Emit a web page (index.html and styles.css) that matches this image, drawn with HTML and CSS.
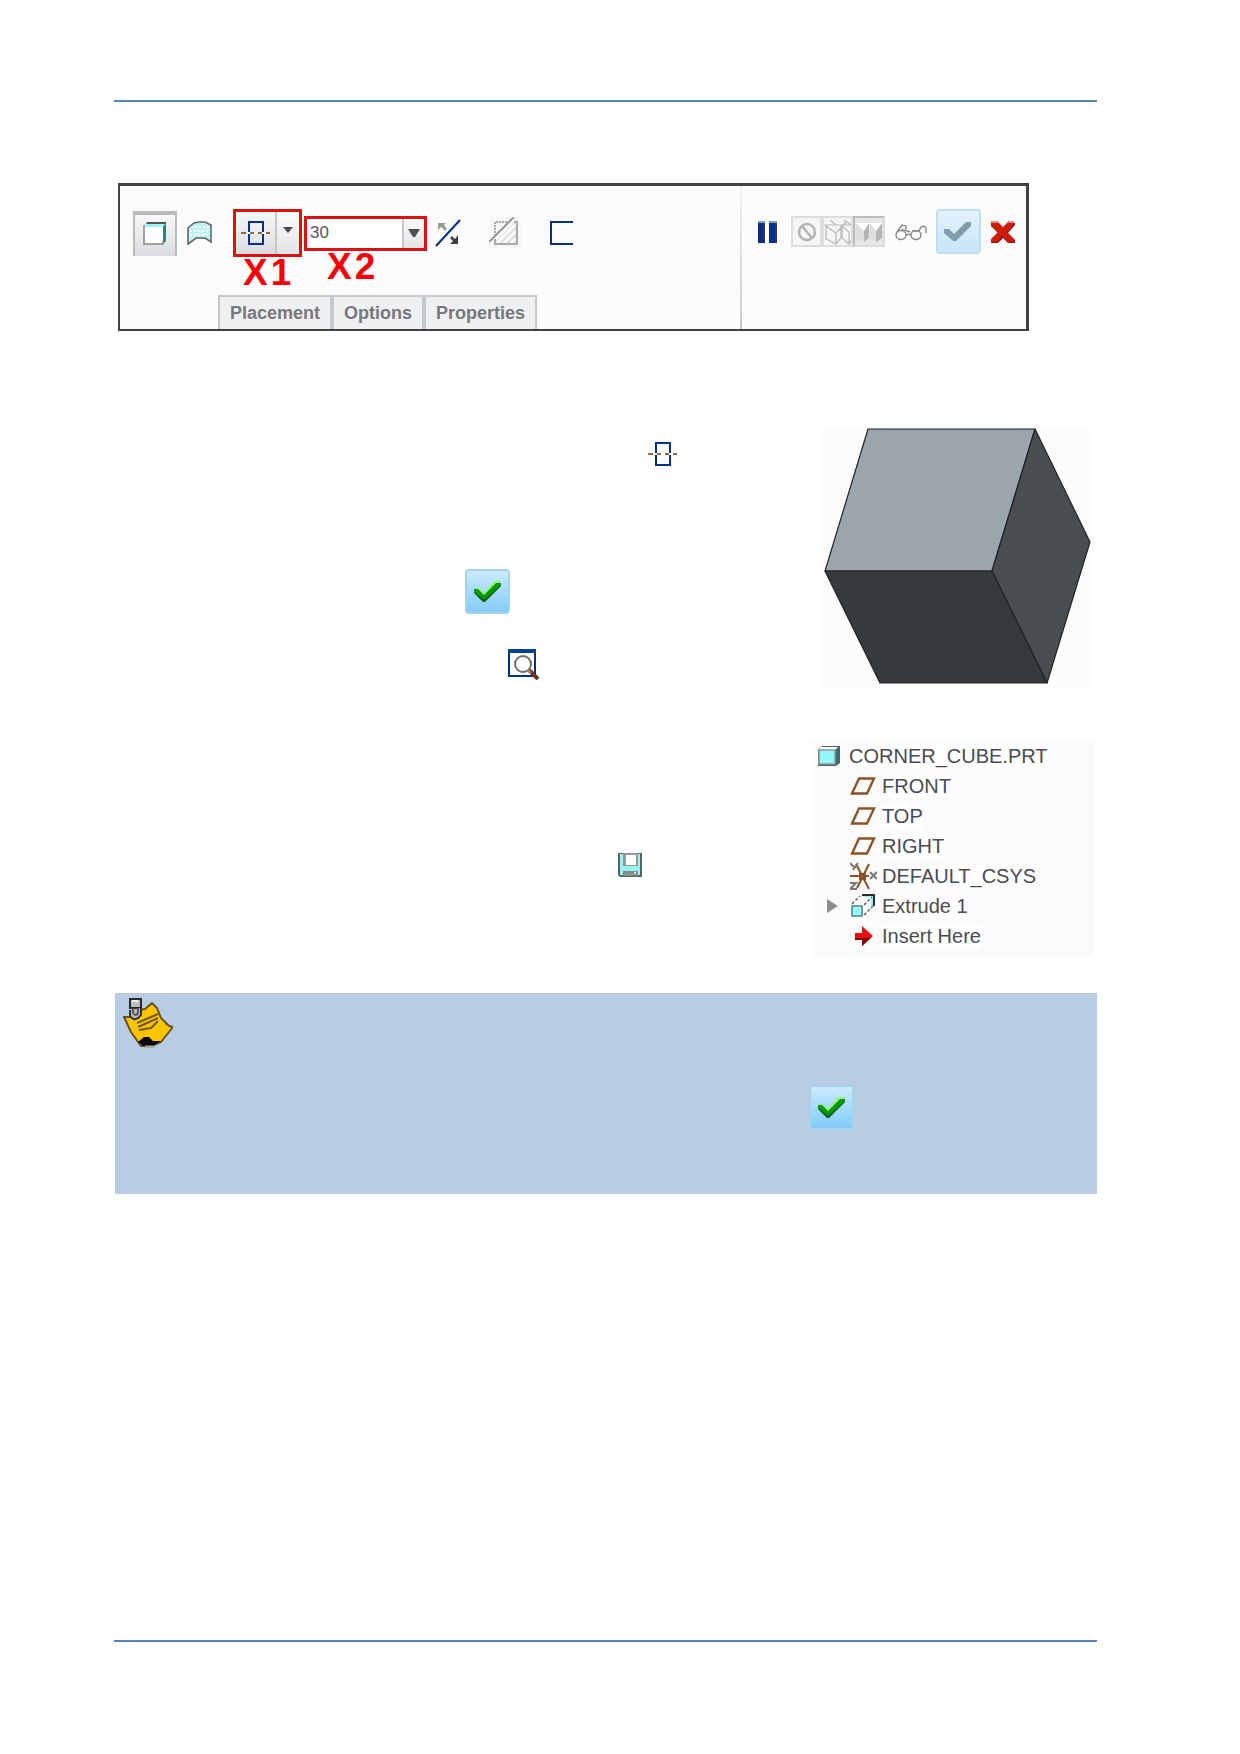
FILE: index.html
```html
<!DOCTYPE html>
<html lang="en">
<head>
<meta charset="utf-8">
<meta name="viewport" content="width=device-width, initial-scale=1">
<title>Corner cube</title>
<link rel="stylesheet" href="styles.css">
</head>
<body>
<svg class="defs" aria-hidden="true">
  <symbol id="symmetric" viewBox="0 0 30 24">
    <path d="M8 1H22V23H8Z" fill="none" stroke="#003087" stroke-width="2"/>
    <path d="M6 12H24" stroke="#fff" stroke-width="2"/>
    <path d="M0 12H5M9 12H13M17 12H21M25 12H29" stroke="#8f6b43" stroke-width="2"/>
  </symbol>
  <symbol id="tick" viewBox="0 0 28 21">
    <path d="M0 7H5L10 12L20 0H27V4L11 19H9L0 11Z" fill="#96f37b"/>
    <path d="M0 9H4L10 15L22 3H27V5L11 21H9L0 12Z" fill="#075b20"/>
    <path d="M0 8H4L10 14L22 2H27V4L11 18H9L0 11Z" fill="#079a08"/>
  </symbol>
  <symbol id="plane" viewBox="0 0 27 18">
    <path d="M9 1.5H24L17 16.5H2Z" fill="none" stroke="#8c5227" stroke-width="2.4"/>
  </symbol>
</svg>
<div class="page">
  <header class="rule"></header>
  <main>
    <section class="dashboard" aria-label="Extrude">
      <div class="left">
        <div class="tools">
          <button class="solid" aria-label="Solid">
            <svg width="24" height="23" viewBox="0 0 24 23"><path d="M20 4L23 1V19L20 22Z" fill="#347f83"/><path d="M4 0H23V2H3Z" fill="#555"/><path d="M3 2H22L19 5H1Z" fill="#9ff5f5"/><path d="M1 5H20V22H1Z" fill="#fff"/><path d="M1 3V22H20V19" fill="none" stroke="#888" stroke-width="1.5"/></svg>
          </button>
          <button class="plain surface" aria-label="Surface">
            <svg width="25" height="25" viewBox="0 0 25 25"><path d="M1 24V7L7 2L12 1H18L24 4V20L18 18H8Z" fill="#bff5f4"/><path d="M4 6H22M3 10H22M3 14H22M5 18H9" stroke="#fff" stroke-width="2" stroke-dasharray="2 2"/><path d="M1 24V7L7 2L12 1H18L24 4V21L18 17H9L1 23" fill="none" stroke="#666" stroke-width="1.6"/></svg>
          </button>
          <div class="callout depth">
            <button class="mode" aria-label="Symmetric depth"><svg width="30" height="24"><use href="#symmetric"/></svg></button>
            <button class="more" aria-label="Depth options"><svg width="10" height="6" viewBox="0 0 10 6"><path d="M0 0H10L5 6Z" fill="#4b4c55"/></svg></button>
            <span class="mark">X<b>1</b></span>
          </div>
          <div class="callout value">
            <input type="text" value="30" aria-label="Depth value">
            <button class="more" aria-label="Recent values"><svg width="12" height="8" viewBox="0 0 12 8"><path d="M0 0H12L7 8H5Z" fill="#4b4c55"/></svg></button>
            <span class="mark">X<b>2</b></span>
          </div>
          <button class="plain flip" aria-label="Flip direction">
            <svg width="26" height="28" viewBox="0 0 26 28"><path d="M1 27L25 1" stroke="#002f87" stroke-width="2"/><path d="M3 4H11L9 6L12 10L10 12L6 8L3 11Z" fill="#9d9c8c"/><path d="M23 16V25H15L18 22L15 19L17 17L20 20Z" fill="#404042"/></svg>
          </button>
          <button class="plain cut" aria-label="Remove material">
            <svg width="32" height="32" viewBox="0 0 32 32"><path d="M0 0H32V32H0Z" fill="#f7f7f7"/><path d="M6 25L26 5H28V27H6Z" fill="#e3e3e3"/><path d="M8 26L27 7M15 26L27 14M22 26L27 21" stroke="#fff" stroke-width="2"/><path d="M6 19V5H19" fill="none" stroke="#aaa" stroke-width="2" stroke-dasharray="2 1"/><path d="M25 5H28V27H6V22" fill="none" stroke="#aaa" stroke-width="2"/><path d="M0 25L25 0" stroke="#999" stroke-width="2"/></svg>
          </button>
          <button class="plain thicken" aria-label="Thicken sketch">
            <svg width="23" height="24" viewBox="0 0 23 24"><path d="M23 1H1V23H23" fill="none" stroke="#002f87" stroke-width="2"/></svg>
          </button>
        </div>
        <div class="tabs">
          <button>Placement</button>
          <button>Options</button>
          <button>Properties</button>
        </div>
      </div>
      <div class="right">
        <button class="plain" aria-label="Pause">
          <svg width="20" height="22" viewBox="0 0 20 22"><path d="M0 0H7V22H0ZM11 0H19V22H11Z" fill="#00308f"/><path d="M0 0H7V2H0ZM11 0H19V2H11Z" fill="#7f9fc5"/><path d="M6 2V21M18 2V21" stroke="#33363e" stroke-width="2"/></svg>
        </button>
        <div class="preview">
          <button aria-label="No preview"><svg width="20" height="20" viewBox="0 0 20 20"><circle cx="10" cy="10" r="8" fill="none" stroke="#b4b4b4" stroke-width="2.5"/><path d="M5 4L15 16" stroke="#b4b4b4" stroke-width="2.5"/></svg></button>
          <button aria-label="Wireframe preview"><svg width="30" height="28" viewBox="0 0 30 28"><path d="M0 7H30M2 8V21L12 26L17 20V8M2 8L12 15V26M12 15L22 4M6 2L12 7M18 8V20L25 26L29 20V8M18 8L25 14V26M20 2L29 8" fill="none" stroke="#b8b8b8" stroke-width="1.2"/></svg></button>
          <button class="on" aria-label="Shaded preview"><svg width="28" height="22" viewBox="0 0 28 22"><path d="M1 2L9 10V21L1 17ZM15 2L21 10V21L15 17Z" fill="#ddd"/><path d="M9 10L14 2V17L9 21ZM21 10L27 2V17L21 21Z" fill="#b6b6b6"/><path d="M1 2H14L9 10ZM15 2H27L21 10Z" fill="#fff"/></svg></button>
        </div>
        <button class="plain glasses" aria-label="Verify">
          <svg width="32" height="18" viewBox="0 0 32 18"><g fill="none" stroke="#8c8c8c" stroke-width="1.5"><ellipse cx="6" cy="12" rx="5" ry="4.5"/><ellipse cx="21" cy="12" rx="5" ry="4.5"/><path d="M2 9L7 2L11 3V6M6 7H10L15 9M11 12L16 11M17 8H24L26 4L29 3L31 5V10"/></g></svg>
        </button>
        <button class="check muted" aria-label="Accept">
          <svg width="28" height="21" viewBox="0 0 28 21"><path d="M0 8H5L10 13L22 1H27V5L12 20H9L0 12Z" fill="#809dad"/></svg>
        </button>
        <button class="plain" aria-label="Cancel">
          <svg width="26" height="22" viewBox="0 0 26 22"><path d="M1 2H7L13 8L19 2H25V4L18 12L25 19V22H18L13 17L8 22H1V19L8 12L1 5Z" fill="#8b170d"/><path d="M1 0H7L13 6L19 0H24V3L17 11L24 18V21H18L12 15L7 21H1V18L8 11L1 4Z" fill="#ce1b0d"/><path d="M1 0H7L8 2H1ZM19 0H24V2H18Z" fill="#ef8b85"/></svg>
        </button>
      </div>
    </section>

    <div class="body">
      <div class="steps">
        <svg class="step symmetric" role="img" aria-label="Symmetric depth"><use href="#symmetric"/></svg>
        <button class="check step accept" aria-label="Accept"><svg width="28" height="21"><use href="#tick"/></svg></button>
        <svg class="step refit" viewBox="0 0 31 31" role="img" aria-label="Refit"><path d="M1 1H27V27H1Z" fill="#fff" stroke="#003087" stroke-width="2"/><path d="M0 0H28V4H0Z" fill="#003f91"/><circle cx="15" cy="15" r="8" fill="#fff" stroke="#717171" stroke-width="2"/><path d="M21 21L30 30" stroke="#69331f" stroke-width="4"/><path d="M20 21L23 24" stroke="#bf8b59" stroke-width="2"/></svg>
        <svg class="step save" viewBox="0 0 24 24" role="img" aria-label="Save"><path d="M0 0H24V24H2L0 22Z" fill="#50676a"/><path d="M2 1H22V22H2Z" fill="#99f3ee"/><path d="M5 0H20V13H5Z" fill="#999"/><path d="M8 2H18V12H8Z" fill="#fff"/><path d="M5 18H20V23H5Z" fill="#858d8d"/><path d="M16 19H18V21H16Z" fill="#ddd"/></svg>
      </div>
      <aside>
        <svg class="cube" viewBox="0 0 272 262" role="img" aria-label="Cube model">
          <g stroke="#202325" stroke-width="1.2" stroke-linejoin="round">
            <path d="M46 3H213L170 145H3Z" fill="#9ba5ad"/>
            <path d="M213 3L268 116L225 257L170 145Z" fill="#484d50"/>
            <path d="M3 145H170L225 257H58Z" fill="#363a3c"/>
          </g>
        </svg>
        <ul class="tree">
          <li class="root"><svg width="22" height="20" viewBox="0 0 22 20"><path d="M4 0H22V17L18 20H0V4Z" fill="#555f61"/><path d="M3 1H20L17 4H1Z" fill="#fff"/><path d="M1 4H17V18H1Z" fill="#94f8fa" stroke="#89999c" stroke-width="1.5"/><path d="M18 4L21 1V16L18 19Z" fill="#376d73"/></svg><span>CORNER_CUBE.PRT</span></li>
          <li><i></i><svg width="27" height="18"><use href="#plane"/></svg><span>FRONT</span></li>
          <li><i></i><svg width="27" height="18"><use href="#plane"/></svg><span>TOP</span></li>
          <li><i></i><svg width="27" height="18"><use href="#plane"/></svg><span>RIGHT</span></li>
          <li><i></i><svg width="27" height="28" viewBox="0 0 27 28"><path d="M0 14H19M6 2L19 27M19 2L7 26" stroke="#8c5227" stroke-width="2" fill="none"/><path d="M9 11H16V18H9Z" fill="#8c5227"/><path d="M0 1L4 5M8 1L3 8M20 10L27 17M27 10L20 17M0 21H6L0 27H7" stroke="#777" stroke-width="2" fill="none"/></svg><span>DEFAULT_CSYS</span></li>
          <li><svg width="12" height="14" viewBox="0 0 12 14"><path d="M1 0L12 7L1 14Z" fill="#8d8d91"/></svg><svg width="27" height="24" viewBox="0 0 27 24"><path d="M14 2H22V12" fill="none" stroke="#9df2f2" stroke-width="2"/><path d="M2 12H12V22H2Z" fill="#94fbfd" stroke="#567f89" stroke-width="1.5"/><path d="M12 1H24V12" fill="none" stroke="#252e30" stroke-width="2"/><path d="M2 10L10 2M14 11L22 3M14 21L23 12" stroke="#666" stroke-dasharray="3 2" stroke-width="1.5"/></svg><span>Extrude 1</span></li>
          <li><i></i><svg width="27" height="20" viewBox="0 0 27 20"><path d="M5 7H12V0L23 10L12 20V14H5Z" fill="#e90d0d"/><path d="M5 12H21L12 20V14H5Z" fill="#830606"/></svg><span>Insert Here</span></li>
        </ul>
      </aside>
    </div>

    <section class="note" aria-label="Note">
      <svg class="sticky" viewBox="0 0 50 50" role="img" aria-label="Pinned note"><path d="M1 19L9 19L15 12L22 11L29 5L34 10L38 20L46 28L50 29L38 44L29 48L18 48L8 34Z" fill="#ffc400" stroke="#655322" stroke-width="2"/><path d="M15 44L21 39L26 39L30 43L38 43L30 48H20Z" fill="#080704"/><path d="M22 49H31" stroke="#aaa" stroke-width="3"/><path d="M14 25L35 16M15 29L35 20M16 32L28 30L35 23" stroke="#6d5909" stroke-width="2" fill="none"/><path d="M7 1H18V10H7Z" fill="#bdbdbd" stroke="#292929" stroke-width="2"/><path d="M7 12V18Q12 25 18 17V10" fill="#bbb" stroke="#333" stroke-width="2"/><path d="M10 10V15Q13 19 15 15V11" fill="none" stroke="#555" stroke-width="2"/><path d="M9 3H15" stroke="#eee" stroke-width="2"/></svg>
      <button class="check confirm" aria-label="Accept"><svg width="28" height="21"><use href="#tick"/></svg></button>
    </section>
  </main>
  <footer class="rule"></footer>
</div>
</body>
</html>
```
FILE: styles.css
```css
* { box-sizing: border-box; }
body { margin: 0; background: #fff; font-family: "Liberation Sans", Arial, sans-serif; }
button { margin: 0; padding: 0; border: 0; background: none; font: inherit; display: grid; place-items: center; flex: none; }
svg { display: block; flex: none; }
.defs { display: none; }

.page { min-height: 100vh; display: flex; flex-direction: column; padding: 100px 143px 112px 114px; }
.rule { border-top: 2px solid #5584ba; }
main { flex: 1; padding-top: 81px; }

.dashboard { display: flex; max-width: 911px; margin-left: 4px; border: solid #434142; border-width: 3px 3px 2px 2px; background: #fcfcfc; }
.left { flex: 1; }
.tools { display: flex; align-items: center; padding: 23px 0 0 13px; }
.solid { width: 44px; height: 45px; border: 2px solid #b9babd; border-width: 4px 2px 0; background: linear-gradient(#f8f8f8, #dadcdf); }
.solid svg { margin-bottom: 4px; }
.surface { margin-left: 10px; }
.callout { position: relative; display: flex; border: 3px solid #dc1010; }
.depth { width: 69px; height: 48px; margin-left: 21px; }
.value { width: 123px; height: 35px; margin-left: 2px; background: #fff; }
.mode { width: 39px; background: linear-gradient(#f8f8f8, #dadcdf); }
.more { flex: 1; border-left: 2px solid #c6c8ca; background: linear-gradient(#fafafa, #e2e4e6); }
.depth .more { padding-bottom: 6px; }
.value input { width: 95px; min-width: 0; padding: 0 3px; border: 0; background: #fff; color: #55565a; font: 17px "Liberation Sans", Arial, sans-serif; }
.mark { position: absolute; top: 100%; left: 7px; margin-top: 3px; color: #f80008; font-size: 37px; font-weight: bold; line-height: 32px; white-space: nowrap; }
.mark b { margin-left: 3px; }
.value .mark { left: 20px; }
.flip { margin-left: 8px; }
.cut { margin-left: 28px; }
.thicken { margin-left: 29px; }
.tabs { display: flex; margin-top: 38px; padding-left: 98px; }
.tabs button { height: 34px; padding: 0 10px; border: 2px solid #c5c9cc; border-bottom: 0; background: #eef0f1; color: #77787d; font-size: 18px; font-weight: bold; }

.right { display: flex; align-items: center; justify-content: space-between; width: 286px; padding: 0 10px 52px 16px; border-left: 2px solid; border-image: linear-gradient(#f3f3f3, #c8c8c8) 1; }
.preview { display: flex; margin-left: 4px; }
.preview button { width: 31px; height: 31px; border: 2px solid #dedede; background: #f6f6f6; overflow: hidden; }
.preview .on { width: 32px; border-color: #bbb #ddd #ddd #bbb; background: #e6e6e6; }
.check { width: 45px; height: 45px; border: 2px solid #a4d3ee; border-radius: 4px; background: linear-gradient(#cbeaff, #82ccf8); }
.muted { border-color: #bfdff0; background: linear-gradient(#e3f2fc, #c8e6fa); }

.body { display: flex; justify-content: space-between; margin-top: 95px; }
.steps { flex: 1; padding-top: 16px; }
.symmetric { width: 30px; height: 24px; margin-left: 534px; }
.accept { margin: 103px 0 0 351px; }
.refit { width: 31px; height: 31px; margin: 35px 0 0 394px; }
.save { width: 24px; height: 24px; margin: 173px 0 0 504px; }
aside { width: 283px; margin-right: 3px; }
.cube { width: 272px; height: 262px; margin-left: auto; background: #fcfcfc; }
.tree { margin: 53px 0 0; padding: 0 0 7px; list-style: none; background: #fbfbfb; color: #4b4a50; font-size: 20px; }
.tree li { display: flex; align-items: center; height: 30px; padding-left: 15px; }
.tree i { width: 12px; }
.tree li > svg:nth-child(2) { margin-left: 12px; }
.tree span { margin-left: 5px; background: #fff; }
.tree .root { padding-left: 7px; }
.tree .root span { margin-left: 9px; }

.note { display: flex; align-items: flex-start; min-height: 201px; margin: 35px 0 0 1px; padding: 5px 8px; background: #b8cce4; }
.sticky { width: 50px; height: 50px; }
.confirm { margin: 87px 0 0 636px; }
```
